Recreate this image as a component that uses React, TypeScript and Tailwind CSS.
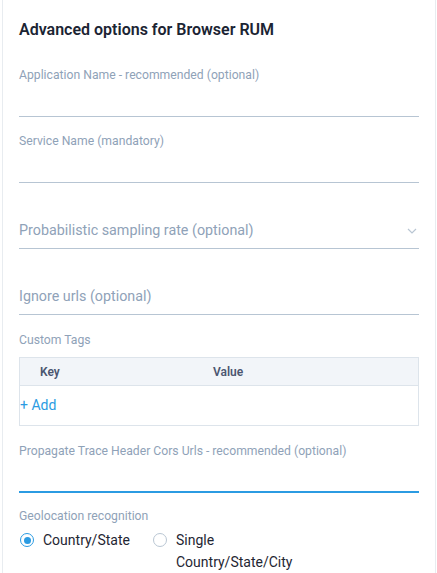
import React from "react";

function TextField({ label }: { label: string }) {
  return (
    <div className="pt-[17px] border-b border-[#b7c5d3]">
      <div className="text-[12.2px] leading-[14px] text-[#8fa2b8]">{label}</div>
      <div className="h-[34px]" />
    </div>
  );
}

function Radio({ checked }: { checked: boolean }) {
  return checked ? (
    <span className="mt-[4px] flex h-[14px] w-[14px] shrink-0 items-center justify-center rounded-full border-[1.5px] border-[#2b9be2]">
      <span className="h-[7px] w-[7px] rounded-full bg-[#2b9be2]" />
    </span>
  ) : (
    <span className="mt-[4px] h-[14px] w-[14px] shrink-0 rounded-full border border-[#b9c6d3]" />
  );
}

export default function App() {
  return (
    <div
      className="ml-[2px] mr-[1px] min-h-[573px] border-x border-[#e8ecf0] bg-white px-4"
      style={{ fontFamily: "Roboto, 'Liberation Sans', sans-serif" }}
    >
      <div className="pt-[20px] h-[51px]">
        <div className="text-[16px] leading-[20px] font-semibold text-[#1b2433]">
          Advanced options for Browser RUM
        </div>
      </div>

      <TextField label="Application Name - recommended (optional)" />
      <TextField label="Service Name (mandatory)" />

      <div className="pt-[37px] pb-[8px] border-b border-[#b7c5d3] flex items-center justify-between">
        <div className="text-[14.3px] leading-[20px] text-[#8fa2b8]">
          Probabilistic sampling rate (optional)
        </div>
        <svg width="10" height="6" viewBox="0 0 10 6" className="mr-[2px] mt-[2px]">
          <path d="M1 1 L5 5 L9 1" fill="none" stroke="#b9c6d3" strokeWidth="1.2" />
        </svg>
      </div>

      <div className="pt-[37px] pb-[8px] border-b border-[#b7c5d3]">
        <div className="text-[14.3px] leading-[20px] text-[#8fa2b8]">Ignore urls (optional)</div>
      </div>

      <div className="mt-[18px] text-[12.2px] leading-[14px] text-[#8fa2b8]">Custom Tags</div>

      <div className="mt-[10px] border border-[#dde4eb]">
        <div className="flex h-[28px] items-center border-b border-[#dde4eb] bg-[#f2f5f9] text-[12px] font-semibold text-[#4b5670]">
          <div className="w-[193px] pl-[20px]">Key</div>
          <div>Value</div>
        </div>
        <div className="flex h-[39px] items-center">
          <span className="text-[14px] text-[#2b9be2]">+ Add</span>
        </div>
      </div>

      <div className="pt-[18px] border-b-2 border-[#2b9be2]">
        <div className="text-[12.2px] leading-[14px] text-[#8fa2b8]">
          Propagate Trace Header Cors Urls - recommended (optional)
        </div>
        <div className="h-[33px]" />
      </div>

      <div className="mt-[16px] text-[12.2px] leading-[14px] text-[#8fa2b8]">
        Geolocation recognition
      </div>

      <div className="mt-[6px] flex text-[14px] leading-[22px] text-[#1f2633]">
        <label className="flex w-[134px] gap-[9px] pl-[1px]">
          <Radio checked />
          <span>Country/State</span>
        </label>
        <label className="flex gap-[9px]">
          <Radio checked={false} />
          <span className="w-[130px]">Single Country/State/City</span>
        </label>
      </div>
    </div>
  );
}
